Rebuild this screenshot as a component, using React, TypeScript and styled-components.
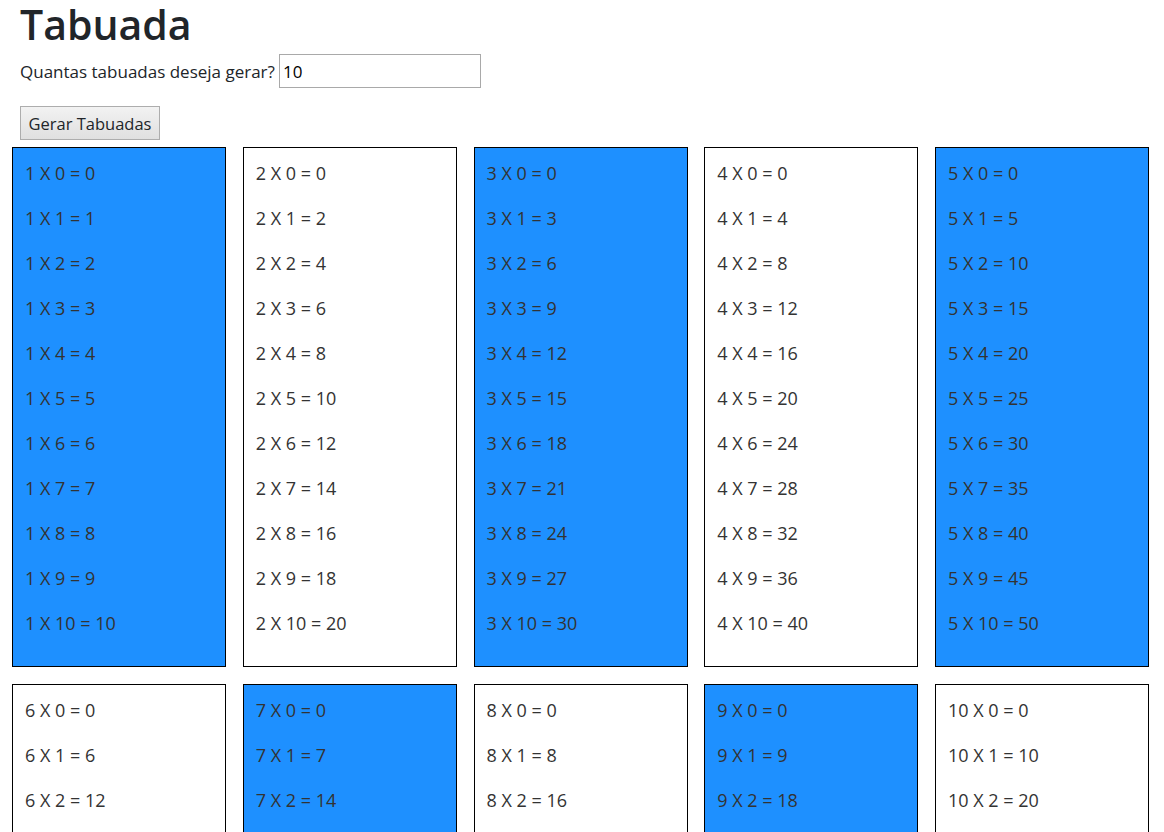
import { useState } from 'react';
import styled, { createGlobalStyle } from 'styled-components';

const GlobalStyle = createGlobalStyle`
  body {
    margin: 0 8px 8px;
    font-family: 'Open Sans', 'Noto Sans', sans-serif;
    color: #212529;
    background: #fff;
  }
`;

const Header = styled.div`
  padding: 0 12px;
`;

const Title = styled.h1`
  margin: 0;
  font-size: 41px;
  font-weight: 600;
  line-height: 48px;
  color: #212529;
`;

const FormRow = styled.div`
  display: flex;
  align-items: center;
  margin-top: 6px;
  font-size: 17px;
`;

const Label = styled.label`
  margin-right: 4px;
`;

const Input = styled.input`
  box-sizing: border-box;
  width: 202px;
  height: 34px;
  padding: 0 3px;
  border: 1px solid #a9a9a9;
  font-family: inherit;
  font-size: 17px;
  color: #000;
  outline: none;
`;

const Button = styled.button`
  display: block;
  box-sizing: border-box;
  margin-top: 18px;
  width: 140px;
  height: 34px;
  padding: 0;
  border: 1px solid #adadad;
  background: linear-gradient(#f2f2f2, #e0e0e0);
  font-family: inherit;
  font-size: 16.5px;
  color: #212529;
  cursor: pointer;
`;

const Grid = styled.div`
  display: grid;
  grid-template-columns: repeat(5, 214px);
  column-gap: 16.75px;
  row-gap: 17px;
  margin: 7px 0 0 4px;
`;

const Card = styled.div<{ $blue: boolean }>`
  box-sizing: border-box;
  height: 520px;
  padding: 12px;
  border: 1px solid #000;
  background: ${({ $blue }) => ($blue ? '#1e90ff' : '#fff')};
`;

const Line = styled.p`
  margin: 0 0 18px;
  font-size: 18px;
  font-weight: 400;
  line-height: 27px;
  color: #333;
`;

const App = () => {
  const [count, setCount] = useState('10');
  const [tables, setTables] = useState(10);

  return (
    <>
      <GlobalStyle />
      <Header>
        <Title>Tabuada</Title>
        <FormRow>
          <Label htmlFor="qtd">Quantas tabuadas deseja gerar?</Label>
          <Input id="qtd" value={count} onChange={e => setCount(e.target.value)} />
        </FormRow>
        <Button onClick={() => setTables(Number(count) || 0)}>Gerar Tabuadas</Button>
      </Header>
      <Grid>
        {Array.from({ length: tables }, (_, i) => i + 1).map(n => (
          <Card key={n} $blue={n % 2 === 1}>
            {Array.from({ length: 11 }, (_, j) => j).map(j => (
              <Line key={j}>
                {n} X {j} = {n * j}
              </Line>
            ))}
          </Card>
        ))}
      </Grid>
    </>
  );
};

export default App;
